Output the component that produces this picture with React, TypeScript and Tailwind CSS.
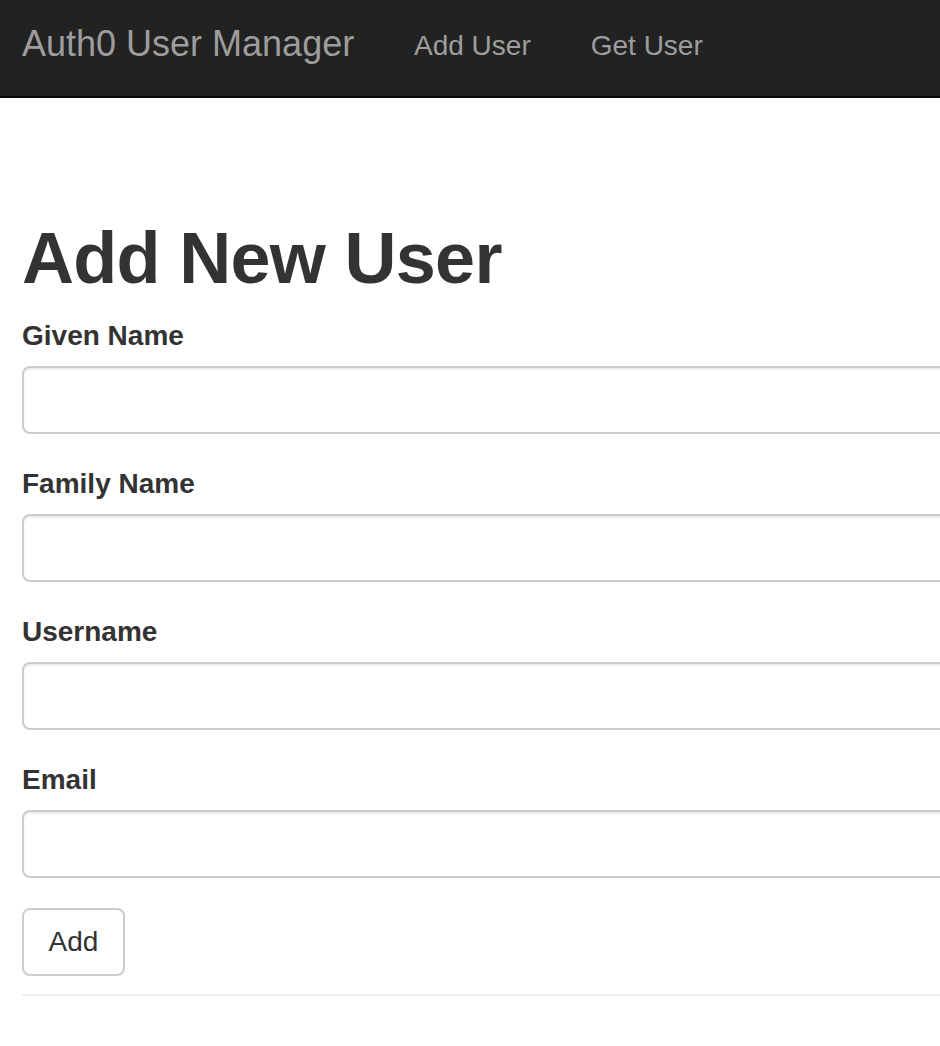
import React from "react"

const fields = [
  { id: "given_name", label: "Given Name", type: "text" },
  { id: "family_name", label: "Family Name", type: "text" },
  { id: "username", label: "Username", type: "text" },
  { id: "email", label: "Email", type: "email" },
]

export default function App() {
  return (
    <div className="min-h-screen overflow-hidden bg-white font-['Liberation_Sans',Arial,sans-serif] text-[#333]">
      {/* navbar */}
      <nav className="flex h-[98px] border-b-2 border-[#080808] bg-[#222]">
        <a href="#" className="block w-[384px] shrink-0 whitespace-nowrap pl-[22px] pt-[24px] text-[36px] leading-[40px] text-[#9d9d9d]">
          Auth0 User Manager
        </a>
        <ul className="flex">
          <li>
            <a href="#" className="block whitespace-nowrap px-[30px] pt-[26px] text-[28px] leading-[40px] text-[#9d9d9d]">
              Add User
            </a>
          </li>
          <li>
            <a href="#" className="block whitespace-nowrap px-[30px] pt-[26px] text-[28px] leading-[40px] text-[#9d9d9d]">
              Get User
            </a>
          </li>
        </ul>
      </nav>

      <main className="w-[1100px] px-[22px] pt-[120px]">
        <h1 className="mb-[18px] text-[72px] font-bold leading-[80px] tracking-[-0.7px]">Add New User</h1>

        <form onSubmit={(e) => e.preventDefault()}>
          {fields.map((f) => (
            <div key={f.id} className="mb-[30px]">
              <label htmlFor={f.id} className="mb-[10px] block text-[28px] font-bold leading-[40px]">
                {f.label}
              </label>
              <input
                id={f.id}
                type={f.type}
                className="block h-[68px] w-full rounded-[8px] border-2 border-[#ccc] bg-white px-[24px] text-[28px] shadow-[inset_0_2px_2px_rgba(0,0,0,0.075)] outline-none"
              />
            </div>
          ))}
          <button
            type="submit"
            className="h-[68px] w-[103px] rounded-[8px] border-2 border-[#ccc] bg-white text-[28px] leading-[40px] text-[#333]"
          >
            Add
          </button>
        </form>

        <hr className="mt-[18px] border-t-2 border-[#eee]" />
      </main>
    </div>
  )
}
